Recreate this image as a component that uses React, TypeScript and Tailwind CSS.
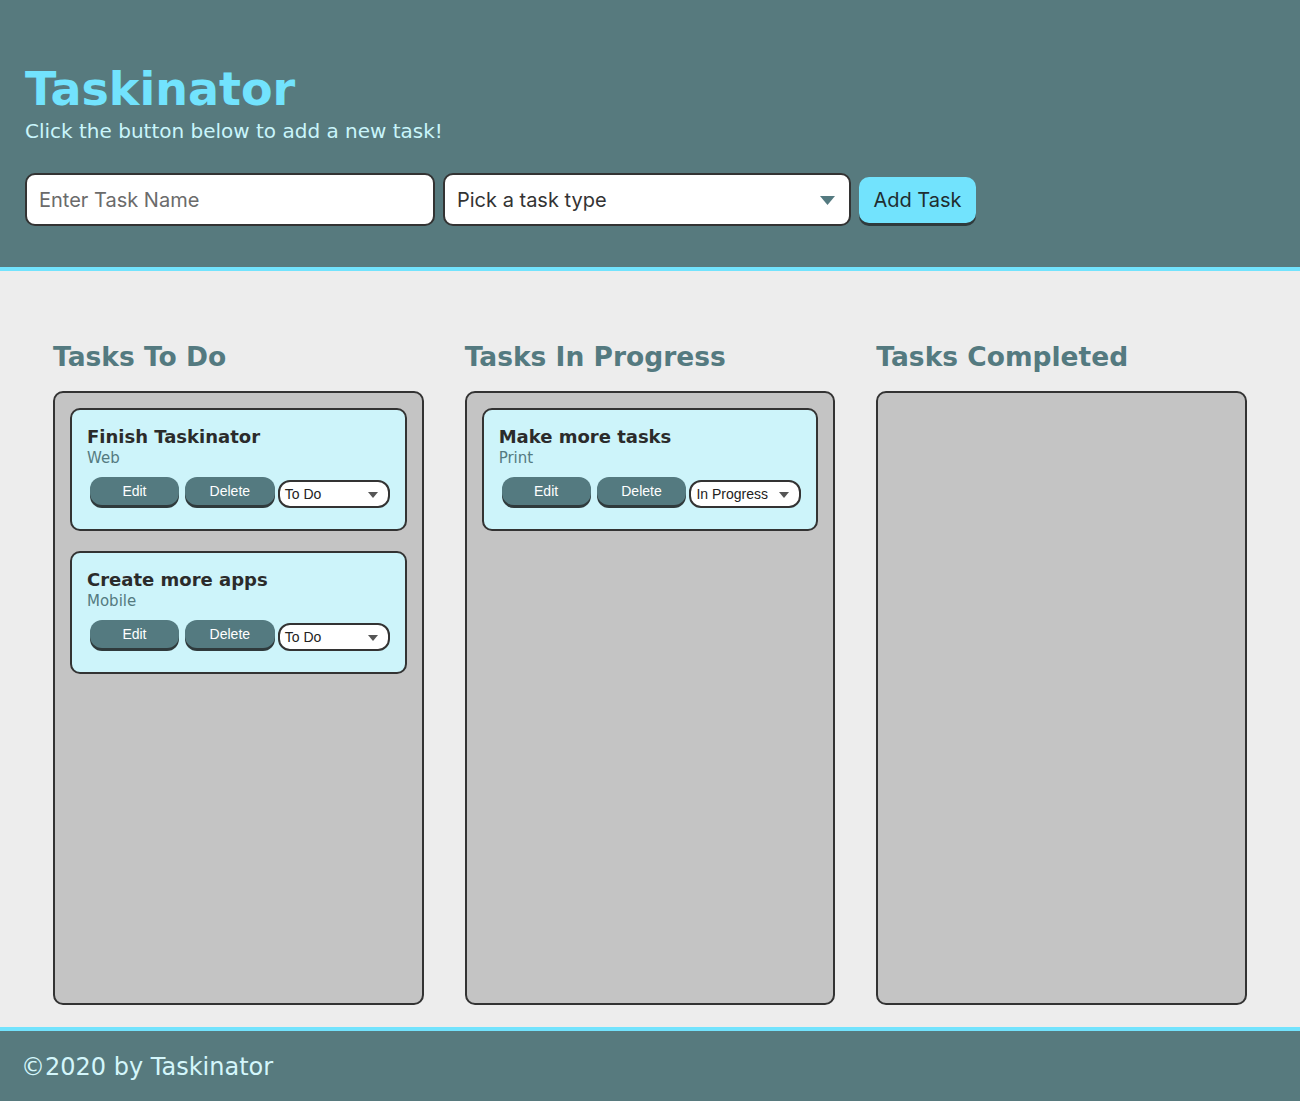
const columns = [
  {
    title: 'Tasks To Do',
    tasks: [
      { name: 'Finish Taskinator', type: 'Web', status: 'To Do' },
      { name: 'Create more apps', type: 'Mobile', status: 'To Do' },
    ],
  },
  {
    title: 'Tasks In Progress',
    tasks: [{ name: 'Make more tasks', type: 'Print', status: 'In Progress' }],
  },
  { title: 'Tasks Completed', tasks: [] as { name: string; type: string; status: string }[] },
];

function Caret({ className }: { className: string }) {
  return (
    <svg viewBox="0 0 10 6" className={className}>
      <path d="M0 0 L10 0 L5 6 Z" fill="currentColor" />
    </svg>
  );
}

function TaskCard({ name, type, status }: { name: string; type: string; status: string }) {
  return (
    <div className="bg-[#cdf4fa] border-2 border-[#333] rounded-[10px] px-[15px] pt-[16px] pb-[21px]">
      <h3 className="font-['DejaVu_Sans',sans-serif] font-bold text-[18px] leading-[22px] text-[#2b2b2b]">
        {name}
      </h3>
      <p className="font-['DejaVu_Sans',sans-serif] text-[15px] leading-[20px] text-[#547a80]">{type}</p>
      <div className="flex items-start gap-[6px] mt-[9px] pl-[3px] font-['Liberation_Sans',sans-serif]">
        <button className="w-[89px] h-[28px] rounded-[12px] bg-[#547a80] text-white text-[14px] shadow-[0_3px_0_#2f3a3c]">
          Edit
        </button>
        <button className="w-[90px] h-[28px] rounded-[12px] bg-[#547a80] text-white text-[14px] shadow-[0_3px_0_#2f3a3c]">
          Delete
        </button>
        <div className="relative -ml-[3px] mt-[3px] w-[112px] h-[28px] bg-white border-2 border-[#333] rounded-[12px] flex items-center pl-[5px] text-[14px] text-[#222]">
          {status}
          <Caret className="absolute right-[10px] top-[10px] w-[10px] h-[6px] text-[#555]" />
        </div>
      </div>
    </div>
  );
}

export default function App() {
  return (
    <div className="min-h-[1101px] bg-[#ededed] flex flex-col">
      <header className="bg-[#577a7e] border-b-4 border-[#72e3fd] px-[25px] pt-[63px] pb-[41px]">
        <h1 className="font-['DejaVu_Sans',sans-serif] font-bold text-[46px] leading-[52px] text-[#72e3fd]">
          Taskinator
        </h1>
        <p className="font-['DejaVu_Sans',sans-serif] text-[20px] leading-[24px] text-[#c9f5fb] mt-[4px]">
          Click the button below to add a new task!
        </p>
        <div className="flex items-start gap-[8px] mt-[30px] font-['Inter',sans-serif]">
          <div className="w-[410px] h-[53px] bg-white border-2 border-[#333] rounded-[10px] flex items-center px-[12px] text-[20px] text-[#6b6b6b]">
            Enter Task Name
          </div>
          <div className="relative w-[408px] h-[53px] bg-white border-2 border-[#333] rounded-[10px] flex items-center px-[12px] text-[20px] text-[#333]">
            Pick a task type
            <Caret className="absolute right-[14px] top-[21px] w-[15px] h-[9px] text-[#547a80]" />
          </div>
          <button className="mt-[4px] w-[117px] h-[46px] bg-[#72e3fd] rounded-[10px] text-[20px] text-[#1f2d30] shadow-[0_3px_0_#2f3a3c]">
            Add Task
          </button>
        </div>
      </header>

      <main className="flex-1 grid grid-cols-3 gap-[41px] px-[53px] pt-[69px] pb-[20px]">
        {columns.map((col) => (
          <section key={col.title} className="flex flex-col">
            <h2 className="font-['DejaVu_Sans',sans-serif] font-bold text-[26.5px] leading-[34px] text-[#547a80]">
              {col.title}
            </h2>
            <div className="mt-[17px] h-[614px] bg-[#c4c4c4] border-2 border-[#333] rounded-[10px] p-[15px] flex flex-col gap-[20px]">
              {col.tasks.map((t) => (
                <TaskCard key={t.name} {...t} />
              ))}
            </div>
          </section>
        ))}
      </main>

      <footer className="bg-[#577a7e] border-t-4 border-[#72e3fd] h-[74px] px-[21px] flex items-center">
        <p className="font-['DejaVu_Sans',sans-serif] text-[24px] text-[#d4f6fb] pt-[1px]">©2020 by Taskinator</p>
      </footer>
    </div>
  );
}
